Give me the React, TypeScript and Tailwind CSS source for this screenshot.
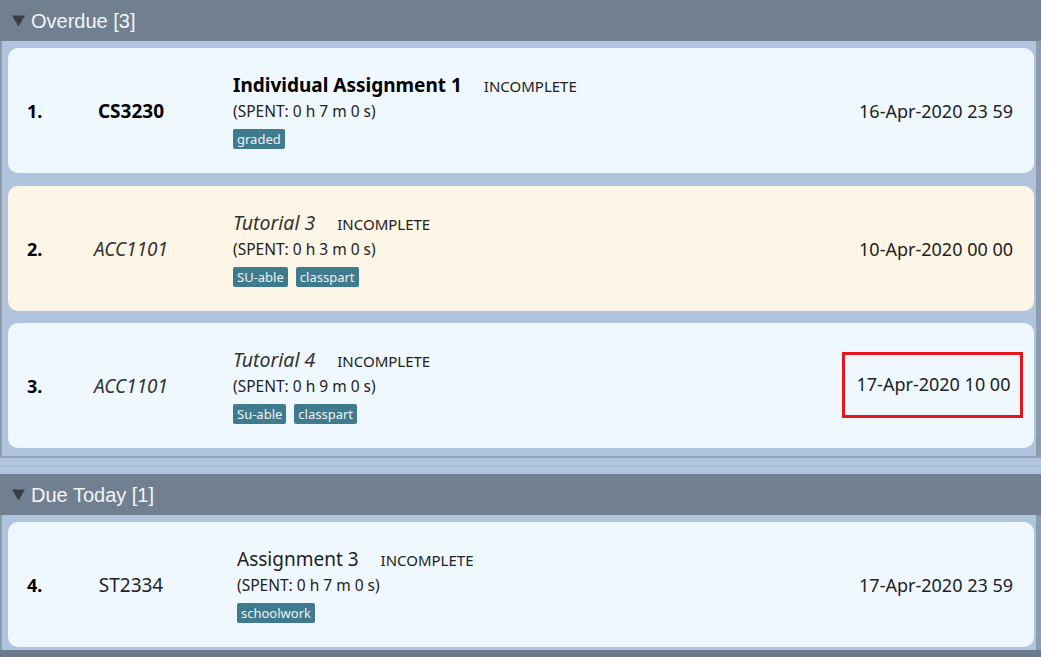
import { ReactNode } from "react";

type Task = {
  idx: number;
  code: string;
  title: string;
  spent: string;
  tags: string[];
  date: string;
  style: "bold" | "italic" | "plain";
  bg: string;
  marked?: boolean;
};

const overdue: Task[] = [
  {
    idx: 1,
    code: "CS3230",
    title: "Individual Assignment 1",
    spent: "(SPENT: 0 h 7 m 0 s)",
    tags: ["graded"],
    date: "16-Apr-2020 23 59",
    style: "bold",
    bg: "bg-[#f0f8ff]",
  },
  {
    idx: 2,
    code: "ACC1101",
    title: "Tutorial 3",
    spent: "(SPENT: 0 h 3 m 0 s)",
    tags: ["SU-able", "classpart"],
    date: "10-Apr-2020 00 00",
    style: "italic",
    bg: "bg-[#fdf5e6]",
  },
  {
    idx: 3,
    code: "ACC1101",
    title: "Tutorial 4",
    spent: "(SPENT: 0 h 9 m 0 s)",
    tags: ["Su-able", "classpart"],
    date: "17-Apr-2020 10 00",
    style: "italic",
    bg: "bg-[#f0f8ff]",
    marked: true,
  },
];

const today: Task[] = [
  {
    idx: 4,
    code: "ST2334",
    title: "Assignment 3",
    spent: "(SPENT: 0 h 7 m 0 s)",
    tags: ["schoolwork"],
    date: "17-Apr-2020 23 59",
    style: "plain",
    bg: "bg-[#f0f8ff]",
  },
];

const Header = ({ label }: { label: string }) => (
  <div className="h-[41px] bg-[#708090] flex items-center pl-[11px] font-['Liberation_Sans',sans-serif] text-[20px] text-[#f4f4f4]">
    <svg width="15" height="12" viewBox="0 0 15 12" className="mr-[5px] mt-[1px]">
      <polygon points="1,0.5 14,0.5 7.5,11.5" fill="#3a3e43" />
    </svg>
    {label}
  </div>
);

const Card = ({ t }: { t: Task }) => {
  const codeCls =
    t.style === "bold"
      ? "font-bold text-black"
      : t.style === "italic"
      ? "italic text-[#333]"
      : "text-[#222]";
  const titleCls =
    t.style === "bold"
      ? "font-bold text-black text-[19px]"
      : t.style === "italic"
      ? "italic text-[#333] text-[19.5px]"
      : "text-[#222] text-[19px]";
  // red highlight box around the due date
  const date: ReactNode = t.marked ? (
    <div className="border-[3px] border-[#e8141e] w-[181px] h-[66px] flex items-center justify-center mr-[-10px] mb-[4px]">
      <span className="pl-[2px]">{t.date}</span>
    </div>
  ) : (
    <span>{t.date}</span>
  );
  return (
    <div className={`h-[125px] rounded-[10px] ${t.bg} flex items-center`}>
      <div className="w-[62px] shrink-0 pl-[19px] text-[18px] font-bold text-black pt-[2px]">{t.idx}.</div>
      <div className={`w-[122px] shrink-0 text-center text-[19px] pt-[2px] ${codeCls}`}>{t.code}</div>
      <div className={`flex-1 flex flex-col ${t.style === "plain" ? "pl-[45px]" : "pl-[41px]"}`}>
        <div className="flex items-baseline">
          <span className={`${titleCls} leading-[26px]`}>{t.title}</span>
          <span className="ml-[22px] text-[15px] text-[#222]">INCOMPLETE</span>
        </div>
        <div className="text-[15.5px] text-[#222] mt-[2px] leading-[22px]">{t.spent}</div>
        <div className="flex gap-[8px] mt-[7px]">
          {t.tags.map((g) => (
            <span
              key={g}
              className="bg-[#3e7b8f] text-[#f2f2f2] text-[13px] leading-[20px] px-[4px] rounded-[2px]"
            >
              {g}
            </span>
          ))}
        </div>
      </div>
      <div className="pr-[21px] text-[18px] text-[#222] pt-[2px]">{date}</div>
    </div>
  );
};

const Panel = ({ tasks, last }: { tasks: Task[]; last?: boolean }) => (
  <div
    className={`bg-[#b0c4de] border-l-2 border-r-[5px] border-[#8d9cad] pl-[6px] pr-[2px] pt-[7px] flex flex-col gap-[12.5px] ${
      last ? "pb-[3px]" : "pb-[8px]"
    }`}
  >
    {tasks.map((t) => (
      <Card key={t.idx} t={t} />
    ))}
  </div>
);

const App = () => {
  return (
    <div className="w-[1041px] h-[657px] overflow-hidden bg-[#6b7b8b] font-['Noto_Sans',sans-serif]">
      <Header label="Overdue [3]" />
      <Panel tasks={overdue} />
      <div className="h-[18px] bg-[#b0c4de] border-t-2 border-[#93a3b5] flex flex-col justify-center">
        <div className="h-[1px] bg-[#a4b8d1]" />
      </div>
      <Header label="Due Today [1]" />
      <Panel tasks={today} last />
    </div>
  );
};

export default App;
